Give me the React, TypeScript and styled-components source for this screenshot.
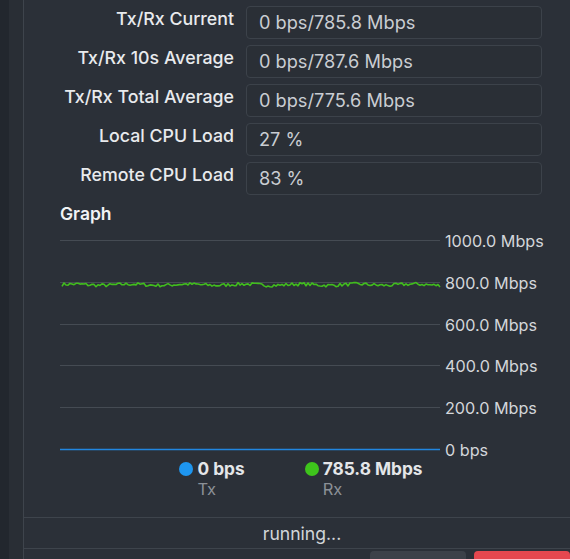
import { Fragment } from 'react';
import styled, { createGlobalStyle } from 'styled-components';

const GlobalStyle = createGlobalStyle`
  html, body {
    margin: 0;
    padding: 0;
    background: #2b3038;
    overflow: hidden;
  }
  * { box-sizing: border-box; }
`;

const Page = styled.div`
  display: flex;
  height: 593px;
  font-family: Inter, "Noto Sans", sans-serif;
  background: #2b3038;
`;

const Rail = styled.div`
  display: flex;
  flex: 0 0 24px;
  border-right: 1px solid #3e444c;
`;

const RailStrip = styled.div<{ $w: number; $bg: string }>`
  width: ${p => p.$w}px;
  background: ${p => p.$bg};
`;

const Main = styled.div`
  flex: 1;
  display: flex;
  flex-direction: column;
  min-width: 0;
`;

const Body = styled.div`
  flex: 1;
  min-height: 0;
  overflow: hidden;
  padding: 0 28px 0 36px;
`;

const Form = styled.div`
  display: grid;
  grid-template-columns: 174px 1fr;
  column-gap: 12px;
  row-gap: 6px;
  margin-top: -33px;
`;

const Label = styled.div`
  text-align: right;
  color: #e8eaed;
  font-size: 17.8px;
  font-weight: 500;
  line-height: 20px;
  padding-top: 3px;
  white-space: nowrap;
`;

const Value = styled.div`
  height: 33px;
  border: 1px solid #3c424a;
  border-radius: 4px;
  background: #2a2f36;
  color: #c9cdd2;
  font-size: 18.2px;
  line-height: 31px;
  padding: 0 12px;
  white-space: nowrap;
`;

const SectionTitle = styled.div`
  margin-top: 9px;
  color: #f1f3f5;
  font-size: 17.5px;
  font-weight: 600;
  line-height: 20px;
`;

const Chart = styled.svg`
  display: block;
  overflow: visible;
`;

const Legend = styled.div`
  display: flex;
  justify-content: center;
  gap: 60px;
  margin-top: -3px;
`;

const LegendItem = styled.div`
  display: grid;
  grid-template-columns: 14px auto;
  column-gap: 4px;
  align-items: center;
`;

const Dot = styled.span<{ $color: string }>`
  width: 14px;
  height: 14px;
  border-radius: 50%;
  background: ${p => p.$color};
`;

const LegendValue = styled.span`
  color: #e4e6e9;
  font-size: 17.3px;
  font-weight: 700;
  line-height: 20px;
`;

const LegendName = styled.span`
  grid-column: 2;
  color: #8b9097;
  font-size: 16.5px;
  line-height: 20px;
`;

const StatusBar = styled.div`
  height: 32px;
  border-top: 1px solid #3e444c;
  border-bottom: 1px solid #3e444c;
  display: flex;
  align-items: center;
  justify-content: center;
  padding-left: 10px;
  color: #d3d6da;
  font-size: 17.6px;
`;

const ButtonBar = styled.div`
  display: flex;
  justify-content: flex-end;
  gap: 8px;
  padding-top: 2px;
  height: 44px;
`;

const Button = styled.button<{ $danger?: boolean }>`
  width: 96px;
  height: 34px;
  border: none;
  border-radius: 4px;
  background: ${p => (p.$danger ? '#e5474f' : '#3c4149')};
`;

// the first row is scrolled almost out of view; only its box edge shows
const rows: [string, string][] = [
  ['', ''],
  ['Tx/Rx Current', '0 bps/785.8 Mbps'],
  ['Tx/Rx 10s Average', '0 bps/787.6 Mbps'],
  ['Tx/Rx Total Average', '0 bps/775.6 Mbps'],
  ['Local CPU Load', '27 %'],
  ['Remote CPU Load', '83 %'],
];

const axis = ['1000.0 Mbps', '800.0 Mbps', '600.0 Mbps', '400.0 Mbps', '200.0 Mbps', '0 bps'];

// chart geometry: plot 0..380 wide, grid lines 16..225
const PLOT_W = 380;
const TOP = 16;
const BOTTOM = 225;
const yFor = (mbps: number) => BOTTOM - (mbps / 1000) * (BOTTOM - TOP);

function rxPath() {
  let seed = 7;
  const rnd = () => {
    seed = (seed * 16807) % 2147483647;
    return seed / 2147483647;
  };
  const pts: string[] = [];
  for (let x = 2; x <= PLOT_W; x += 2) {
    const v = 786 + (rnd() - 0.5) * 16 + Math.sin(x / 9) * 3;
    pts.push(`${x},${yFor(v).toFixed(1)}`);
  }
  return 'M' + pts.join(' L');
}

export default function App() {
  return (
    <>
      <GlobalStyle />
      <Page>
        <Rail>
          <RailStrip $w={9} $bg="#22272e" />
          <RailStrip $w={14} $bg="#292e35" />
        </Rail>
        <Main>
          <Body>
            <Form>
              {rows.map(([label, value], i) => (
                <Fragment key={i}>
                  <Label>{label}</Label>
                  <Value>{value}</Value>
                </Fragment>
              ))}
            </Form>

            <SectionTitle>Graph</SectionTitle>
            <Chart width={500} height={238} viewBox="0 0 500 238">
              {axis.map((t, i) => {
                const y = Math.round(TOP + i * ((BOTTOM - TOP) / 5)) + 0.5;
                const last = i === axis.length - 1;
                return (
                  <g key={t}>
                    <line
                      x1={0}
                      x2={PLOT_W}
                      y1={y}
                      y2={y}
                      stroke={last ? '#2186e0' : '#454b53'}
                      strokeWidth={last ? 1.4 : 1}
                    />
                    <text
                      x={385}
                      y={y + 6}
                      fill="#d3d6da"
                      fontSize={16.2}
                      fontFamily="Inter, sans-serif"
                    >
                      {t}
                    </text>
                  </g>
                );
              })}
              <path d={rxPath()} fill="none" stroke="#41bd1d" strokeWidth={1.6} strokeLinejoin="round" />
            </Chart>

            <Legend>
              <LegendItem>
                <Dot $color="#1e96f0" />
                <LegendValue>0 bps</LegendValue>
                <LegendName>Tx</LegendName>
              </LegendItem>
              <LegendItem>
                <Dot $color="#3ec41c" />
                <LegendValue>785.8 Mbps</LegendValue>
                <LegendName>Rx</LegendName>
              </LegendItem>
            </Legend>
          </Body>

          <StatusBar>running...</StatusBar>
          <ButtonBar>
            <Button aria-label="Close" />
            <Button $danger aria-label="Stop" />
          </ButtonBar>
        </Main>
      </Page>
    </>
  );
}
